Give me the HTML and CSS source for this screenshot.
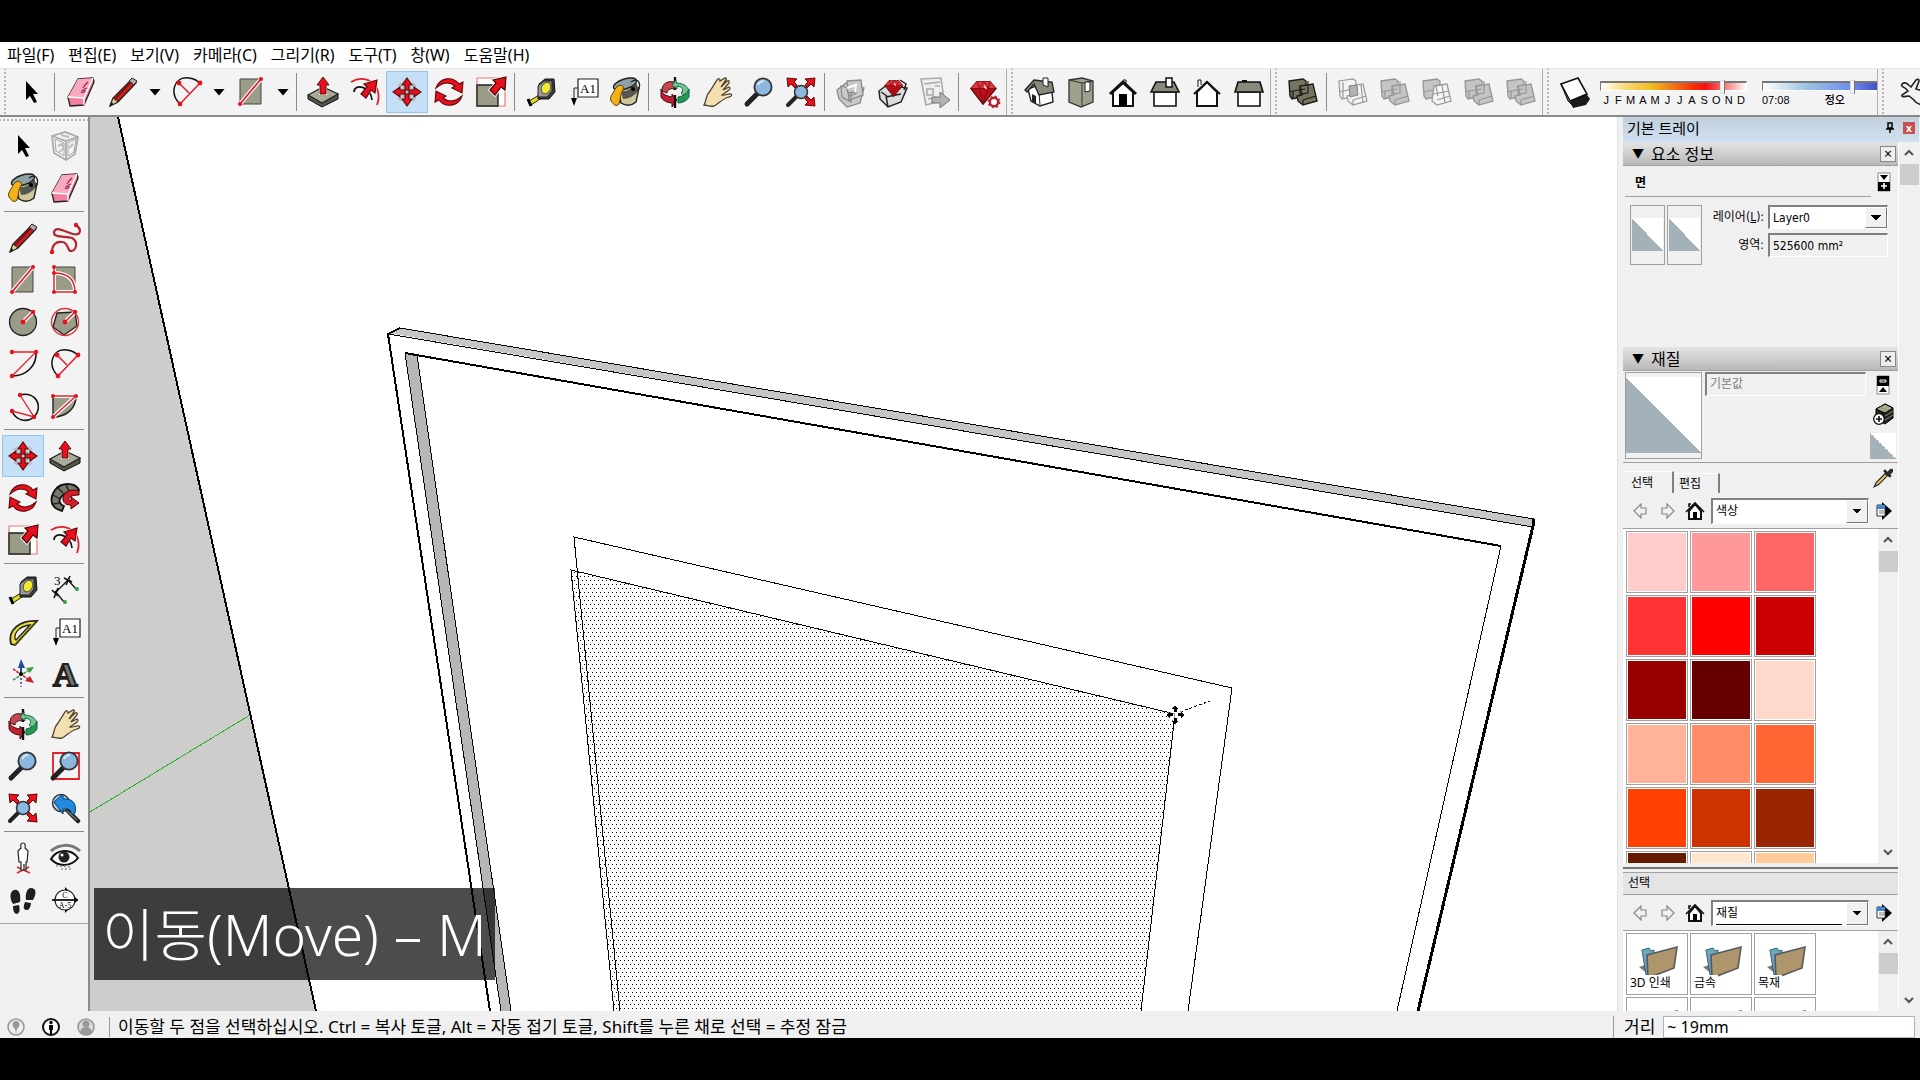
FILE: index.html
```
<!DOCTYPE html>
<html lang="ko">
<head>
    <meta charset="UTF-8">
    <meta name="viewport" content="width=device-width, initial-scale=1.0">
    <title>SketchUp</title>
    <link rel="stylesheet" href="styles.css">
</head>
<body>
    <!-- icon set, 32x32 each -->
    <svg class="sprite" aria-hidden="true">
        <symbol id="cursor" viewBox="0 0 32 32"><path d="M11 5v19l4-4 4 7 3-1-4-8h5z" fill="#000"/></symbol>
        <symbol id="eraser" viewBox="0 0 32 32">
            <path d="M3 21 13 3l15-1 1 4-10 23-14 1z" fill="#f47f9c" stroke="#222" stroke-width="1.3" stroke-linejoin="round"/>
            <path d="M13 3l15-1-8 20L3 21z" fill="#f9a9be"/><path d="M3 21l16 1 9-20M19 22v7" fill="none" stroke="#fff" stroke-width="1.4"/>
            <path d="M16 17l2-3 2 1-2 2M18 12l2-3M20 9l3-3M19 13l3-1" stroke="#902848" stroke-width="1.2" fill="none"/>
        </symbol>
        <symbol id="pencil" viewBox="0 0 32 32">
            <path d="M3 30l3-8L25 3l4 4-18 19z" fill="#c8201c" stroke="#222" stroke-width="1.3"/>
            <path d="M3 30l3-8 5 4z" fill="#e6cf9b" stroke="#222"/><path d="M3 30l2-4 1 2z"/>
            <path d="M8 23 24 6" stroke="#7a1010" stroke-width="1.6"/><path d="M22 5l3-3 5 3-3 4z" fill="#b9a8ac" stroke="#222"/>
        </symbol>
        <symbol id="arc2" viewBox="0 0 32 32">
            <path d="M9 28C-2 17 3 0 18 2q8 1 11 6" fill="none" stroke="#111" stroke-width="1.5"/>
            <path d="M8 7l10 10M29 7 9 28" stroke="#e0202c" stroke-width="1.5"/>
            <g fill="#e8101c"><circle cx="8" cy="7" r="2.4"/><circle cx="29" cy="7" r="2.4"/><circle cx="9" cy="28" r="2.4"/></g>
        </symbol>
        <symbol id="rect" viewBox="0 0 32 32">
            <path d="M5 3h21v25H5z" fill="#9b9c88" stroke="#444"/><path d="M5 28 26 3" stroke="#fff" stroke-width="4"/><path d="M5 28 26 3" stroke="#e0202c" stroke-width="1.8"/>
            <g fill="#e8101c"><circle cx="5" cy="28" r="2"/><circle cx="26" cy="3" r="2"/></g>
        </symbol>
        <symbol id="push" viewBox="0 0 32 32">
            <path d="M1 19v4l14 8 16-8v-5z" fill="#55564a" stroke="#111"/><path d="M1 19l15-8 15 7-16 9z" fill="#a9aa97" stroke="#222" stroke-width="1.2"/>
            <path d="M12 19V10H9l7-10 7 10h-3v9z" fill="#fff"/><path d="M13 18V9h-3l6-8 6 8h-3v9z" fill="#e8101c" stroke="#5b0a0c"/>
        </symbol>
        <symbol id="offset" viewBox="0 0 32 32">
            <path d="M2 6C18-4 35 11 28 29" fill="none" stroke="#e0202c" stroke-width="1.8"/><path d="M5 16c0-9 17-6 18 8" fill="none" stroke="#111" stroke-width="1.7"/>
            <path d="M13 21l5-10-4-4L29 3l-2 15-4-4-6 9z" fill="#fff"/><path d="M12 18l6-7-3-3 13-4-2 13-4-3-5 8z" fill="#e8101c" stroke="#5b0a0c" stroke-width="1.2"/>
        </symbol>
        <symbol id="move" viewBox="0 0 32 32">
            <path d="M8 8l16 16M24 8 8 24" stroke="#bbb" stroke-width="5" stroke-dasharray="3 2"/>
            <g fill="#e8101c" stroke="#5b0a0c" stroke-width="1.1"><path id="mv" d="M16 2l5 7h-3v5h-4V9h-3z"/><use href="#mv" transform="rotate(90 16 16)"/><use href="#mv" transform="rotate(180 16 16)"/><use href="#mv" transform="rotate(270 16 16)"/></g>
        </symbol>
        <symbol id="rotate" viewBox="0 0 32 32">
            <g fill="#e8101c" stroke="#5b0a0c" stroke-width="1.1"><path id="rt" d="M3 12C7 1 20 0 26 8l4-2-1 11-10-5 3-2C17 6 10 6 3 12z"/><use href="#rt" transform="rotate(180 16 16)"/></g>
        </symbol>
        <symbol id="scale" viewBox="0 0 32 32">
            <path d="M2 2h28v28H2z" fill="#fff" stroke="#e77" stroke-width="1.2"/><path d="M2 9h21v21H2z" fill="#9b9c88" stroke="#222" stroke-width="1.4"/>
            <path d="M15 14l6-7-3-3 13-3-1 13-4-3-6 8z" fill="#e8101c" stroke="#fff" stroke-width="3"/><path d="M15 14l6-7-3-3 13-3-1 13-4-3-6 8z" fill="#e8101c" stroke="#400" stroke-width="1.2"/>
        </symbol>
        <symbol id="tape" viewBox="0 0 32 32">
            <path d="M4 25 16 18l2 3-12 8z" fill="#e6dc1e" stroke="#222"/><path d="M3 23l3 7" stroke="#000" stroke-width="3"/>
            <path d="M14 8 20 3h9l1 13-6 7H13z" fill="#3c3c3c" stroke="#111"/><path d="M13 10 19 5h8v10l-5 6h-9z" fill="#999" stroke="#222"/><ellipse cx="21" cy="12" rx="4.5" ry="6" transform="rotate(25 21 12)" fill="#f2ea2a" stroke="#555"/>
        </symbol>
        <symbol id="paint" viewBox="0 0 32 32">
            <path d="M8 10l4 17q8 5 15-1l3-14z" fill="#cfc79a" stroke="#222" stroke-width="1.4"/><path d="M12 15q8 2 15-9l3 8q-7 9-16 9z" fill="#55564e"/>
            <ellipse cx="16" cy="8" rx="12" ry="5" transform="rotate(-18 16 8)" fill="#8ca2a6" stroke="#222" stroke-width="1.4"/>
            <path d="M6 13C10 7 16 9 14 14c-3 3-2 8-4 14-3 3-5 1-8-3-2-4 2-7 4-12z" fill="#f3b019" stroke="#5b4208"/><path d="M22 6c8-6 11 4 6 9" fill="none" stroke="#222" stroke-width="1.3"/><circle cx="24" cy="13" r="2"/>
        </symbol>
        <symbol id="orbit" viewBox="0 0 32 32">
            <path d="M16 1v13" stroke="#111" stroke-width="2.4"/><path d="M3 15C3 6 10 5 15 6v7C11 12 8 14 8 17z" fill="#c84850" stroke="#411"/>
            <path d="M17 4l-4 5 5 4v-3c6 1 7 4 4 7l6 4c5-7-1-14-11-14z" fill="#77c492" stroke="#164"/><path d="M30 13v8c-2 4-7 6-11 6v-6c5-1 9-3 11-8z" fill="#259653" stroke="#164"/>
            <path d="M2 13v8c2 4 7 6 11 6v4l5-7-5-6v3C7 20 3 18 2 13z" fill="#c21d32" stroke="#411"/><path d="M16 19v13" stroke="#111" stroke-width="2.4"/>
        </symbol>
        <symbol id="pan" viewBox="0 0 32 32"><path d="M3 29c3-5 1-9 6-14L16 4q3-3 3 1L24 2q2 0 1 2l-5 7 6-6q3-1 2 2l-6 7 6-3q2 1 0 3l-7 5c3 1 6-2 9-1q2 2-2 3c-7 2-11 7-15 9-4 1-7-1-10-1z" fill="#f3dfb0" stroke="#4c4330" stroke-width="1.3"/></symbol>
        <symbol id="zoom" viewBox="0 0 32 32"><path d="M4 28l10-10" stroke="#222" stroke-width="5" stroke-linecap="round"/><circle cx="20" cy="11" r="8.6" fill="#8cb7de" stroke="#333" stroke-width="1.8"/><path d="M15 9q2-4 6-4" fill="none" stroke="#d6e7f5" stroke-width="2"/></symbol>
        <symbol id="zoomwin" viewBox="0 0 32 32"><path d="M4 3h26v26H4z" fill="none" stroke="#e0202c" stroke-width="1.8"/><use href="#zoom"/></symbol>
        <symbol id="zoomext" viewBox="0 0 32 32">
            <path d="M3 29l9-9" stroke="#222" stroke-width="4" stroke-linecap="round"/><circle cx="16" cy="16" r="6.5" fill="#8cb7de" stroke="#333" stroke-width="1.5"/>
            <g fill="#e8101c" stroke="#5b0a0c"><path id="ze" d="M30 2l-1 9-3-3-4 4-2-3 3-3-3-3z"/><use href="#ze" transform="matrix(-1 0 0 1 32 0)"/><use href="#ze" transform="matrix(1 0 0 -1 0 32)"/></g>
        </symbol>
        <symbol id="prev" viewBox="0 0 32 32"><path d="M18 18l11 11" stroke="#222" stroke-width="4.5" stroke-linecap="round"/><circle cx="12" cy="11" r="8.5" fill="#a9cbe8" stroke="#333" stroke-width="1.4"/><path d="M5 10 14 2v5c10-1 14 5 12 14l-4 2c1-5-2-7-8-6v5z" fill="#2389dc" stroke="#0b3d6b"/><path d="M18 19l10 9" stroke="#777" stroke-width="1.4"/></symbol>
        <symbol id="getmodel" viewBox="0 0 32 32"><g fill="#c9c9c9" stroke="#8b8b8b" stroke-width="1.3"><path d="M2 14l9-7 18 5-4 15-13 4-8-8z"/><path d="M12 5l14-1 2 15-14 5zM6 10l10 3v13l-9-5z"/><path d="M12 12l9-3-1 7-7 1zM14 20l8-3"/></g><path d="M12 12l9-3-1 7" fill="none" stroke="#fff" stroke-width="2"/></symbol>
        <symbol id="gem" viewBox="0 0 32 32"><path d="M9 4h15l7 8-15 18L2 12z" fill="#b80f1a" stroke="#4d0509" stroke-width="1.3"/><path d="M9 4h15l7 8H2z" fill="#dd3a3f"/><path d="M2 12h29M9 4l3 8 4 17 6-17 2-8M12 12l5-8 5 8" fill="none" stroke="#7e0b12"/><path d="M18 7l3 6-4-2z" fill="#ffd7d7"/></symbol>
        <symbol id="warehouse" viewBox="0 0 32 32"><path d="M2 15l8-6 20 3-6 14-13 5-8-8z" fill="#ddd" stroke="#222" stroke-width="1.5"/><path d="M9 21l15-3M11 31l-2-11M23 4l6 4-2 6M4 16l6 4" fill="none" stroke="#222" stroke-width="1.5"/><use href="#gem" x="4" y="2" width="25" height="20"/></symbol>
        <symbol id="layout" viewBox="0 0 32 32"><g fill="#eee" stroke="#aaa" stroke-width="1.6"><path d="M2 3l20-1 3 22-18 5z"/><path d="M5 8l16-2M8 13h6v6H8zM16 10h5M9 23l8-2" fill="none"/></g><path d="M13 21h8v-5l10 8-10 8v-5h-8z" fill="#b2b2b2" stroke="#777"/></symbol>
        <symbol id="ruby" viewBox="0 0 32 32"><use href="#gem" width="28" height="30" y="1"/><circle cx="25" cy="26" r="4.2" fill="#fff" stroke="#b9202a" stroke-width="2.5"/><circle cx="25" cy="26" r="5.7" fill="none" stroke="#b9202a" stroke-width="1.5" stroke-dasharray="2 2.5"/></symbol>
        <symbol id="iso" viewBox="0 0 32 32"><path d="M5 13l3 12 9 5 13-4-1-10-11-8z" fill="#fff" stroke="#222" stroke-width="1.4"/><path d="M17 29l-1-12 12-3" fill="none" stroke="#222"/><path d="M2 14l9-10 18 2 2 10-15 3-5-11-7 8z" fill="#88897a" stroke="#222" stroke-width="1.3"/><path d="M20 2h5v9l-5-2z" fill="#fff" stroke="#222"/><path d="M9 18l4 2v8l-4-2z" fill="#222"/></symbol>
        <symbol id="top" viewBox="0 0 32 32"><path d="M4 4l13-2 11 3v21l-12 5-12-5z" fill="#9fa18c" stroke="#333" stroke-width="1.3"/><path d="M4 4l13 3 11-2M17 7v23" fill="none" stroke="#333"/><path d="M20 6h5v9l-5 1z" fill="#fff" stroke="#222"/></symbol>
        <symbol id="front" viewBox="0 0 32 32"><path d="M6 16v14h20V16L16 7z" fill="#fff" stroke="#111" stroke-width="2"/><path d="M3 18 16 6l13 12" fill="none" stroke="#111" stroke-width="3"/><path d="M12 18h8v12h-8z"/><path d="M16 4h3v4" fill="none" stroke="#111"/></symbol>
        <symbol id="right" viewBox="0 0 32 32"><path d="M5 16h22v14H5z" fill="#fff" stroke="#111" stroke-width="1.6"/><path d="M7 6h18l5 10H2z" fill="#88897a" stroke="#111" stroke-width="1.6"/><path d="M17 2h6v9h-6z" fill="#fff" stroke="#111" stroke-width="1.5"/></symbol>
        <symbol id="back" viewBox="0 0 32 32"><path d="M7 11V4h3v5" fill="#fff" stroke="#111"/><path d="M6 16v14h20V16L16 6z" fill="#fff" stroke="#111" stroke-width="2"/><path d="M3 18 16 6l13 12" fill="none" stroke="#111" stroke-width="2"/></symbol>
        <symbol id="left" viewBox="0 0 32 32"><path d="M5 16h22v14H5z" fill="#fff" stroke="#111" stroke-width="1.6"/><path d="M5 6h22l3 10H2z" fill="#88897a" stroke="#111" stroke-width="1.6"/><path d="M9 5h5" stroke="#111" stroke-width="2"/></symbol>
        <symbol id="shell" viewBox="0 0 32 32"><g fill="#75745f" stroke="#1c1c18" stroke-width="1.4"><path d="M2 5l14-2 3 2v15L5 23l-2-3z"/><path d="M13 10l13-2 4 17-14 4-5-4-1-5 5-1z"/></g><path d="M2 16l4-1 12-2M16 24l13-4M6 15v7M16 24v5M13 10v8l8-1V5" fill="none" stroke="#1c1c18" stroke-width="1.2"/></symbol>
        <symbol id="solid" viewBox="0 0 32 32"><g fill="#c4c4c4" stroke="#969696" stroke-width="1.3"><path d="M2 5l14-2 3 2v15L5 23l-2-3z"/><path d="M13 10l13-2 4 17-14 4-5-4-1-5 5-1z"/></g><path d="M2 16l4-1 12-2M16 24l13-4M6 15v7M16 24v5M13 10v8l8-1V5" fill="none" stroke="#969696" stroke-width="1.2"/></symbol>
        <symbol id="solidsect" viewBox="0 0 32 32"><g fill="#f3f3f3" stroke="#999" stroke-width="1.2"><path d="M2 5l14-2 3 2v15L5 23l-2-3z"/><path d="M13 10l13-2 4 17-14 4-5-4-1-5 5-1z"/></g><path d="M2 16l4-1 12-2M16 24l13-4M6 6v16M16 24v5M24 9l2 18" fill="none" stroke="#999" stroke-width="1.2"/><path d="M12 10l8-1 1 10-8 2z" fill="#b0b0b0" stroke="#888"/></symbol>
        <symbol id="solidsub" viewBox="0 0 32 32"><path d="M2 5l14-2 3 2v15L5 23l-2-3z" fill="#c4c4c4" stroke="#969696" stroke-width="1.3"/><path d="M13 10l13-2 4 17-14 4-5-4z" fill="#f4f4f4" stroke="#999" stroke-width="1.3"/><path d="M2 16l10-2M13 18l15-3M16 24l13-4M21 9l3 18M15 10l2 10" fill="none" stroke="#999" stroke-width="1.2"/></symbol>
        <symbol id="shadow" viewBox="0 0 32 32"><path d="M9 21l17-5 5 7-4 6-13 3z" fill="#1b1b1b"/><path d="M2 8l17-6 9 16-17 7z" fill="#fff" stroke="#111" stroke-width="1.6"/><path d="M2 8l9 17 4 6-6-6z" fill="#777" stroke="#111"/></symbol>
        <symbol id="interact" viewBox="0 0 32 32"><path d="M8 8c4-3 6 1 9 3l5-7q3-2 3 1l-3 8c5 1 8 3 10 2M8 8c-2 3 4 3 6 7l-6 4c-1 3 4 1 7 1l5 4c2 4 7 5 12 6" fill="none" stroke="#222" stroke-width="1.6"/></symbol>
        <symbol id="component" viewBox="0 0 32 32"><g fill="none" stroke="#a9a9a9" stroke-width="1.7"><path d="M3 6l13-4 13 5-3 17-9 6-12-7zM3 6l14 5 12-4M17 11v19"/><path d="M6 9l9 4v13l-8-5zM19 13l8-4-2 13-6 4z" stroke-width="1"/></g><path d="M9 16l4-2 2 6M20 18l4-4M10 22l4-3M12 5l8 2" stroke="#bbb" stroke-width="2" fill="none"/></symbol>
        <symbol id="freehand" viewBox="0 0 32 32"><path d="M27 3c6 4 5 11-3 9C14 9 7 4 5 10c-1 6 11 4 18 6 7 4 4 14-2 13-3-2-2-9-8-9-6-1-10 3-10 10" fill="none" stroke="#b3252d" stroke-width="2.2"/><g fill="#e8101c"><circle cx="27" cy="3" r="2.2"/><circle cx="3" cy="30" r="2.2"/></g></symbol>
        <symbol id="rotrect" viewBox="0 0 32 32"><path d="M5 3h21v25H5z" fill="#9b9c88" stroke="#444"/><path d="M5 3v25h21C26 16 19 9 5 9" fill="none" stroke="#fff" stroke-width="4"/><path d="M5 3v25h21C26 16 19 9 5 9" fill="none" stroke="#e0202c" stroke-width="1.5"/><g fill="#e8101c"><circle cx="5" cy="3" r="2"/><circle cx="5" cy="9" r="2"/><circle cx="5" cy="28" r="2"/><circle cx="26" cy="28" r="2"/></g></symbol>
        <symbol id="circle" viewBox="0 0 32 32"><circle cx="16" cy="16" r="13.5" fill="#9b9c88" stroke="#222" stroke-width="1.3"/><path d="M16 16 26 6" stroke="#fff" stroke-width="4"/><path d="M16 16 26 6" stroke="#e0202c" stroke-width="1.6"/><g fill="#e8101c"><circle cx="16" cy="16" r="2.4"/><circle cx="26" cy="6" r="2.2"/></g></symbol>
        <symbol id="polygon" viewBox="0 0 32 32"><path d="M26 6 28 20 15 29 4 21 8 7z" fill="#9b9c88" stroke="#222" stroke-width="1.4"/><circle cx="16" cy="16" r="13.5" fill="none" stroke="#e0303a" stroke-width="1.3"/><path d="M16 16 26 6" stroke="#fff" stroke-width="4"/><path d="M16 16 26 6" stroke="#e0202c" stroke-width="1.6"/><g fill="#e8101c"><circle cx="16" cy="16" r="2.4"/><circle cx="26" cy="6" r="2.2"/></g></symbol>
        <symbol id="arc" viewBox="0 0 32 32"><path d="M29 4c1 14-10 24-24 24" fill="none" stroke="#111" stroke-width="1.6"/><path d="M5 4h24L5 28" fill="none" stroke="#e0202c" stroke-width="1.3"/><g fill="#e8101c"><circle cx="5" cy="4" r="2.2"/><circle cx="29" cy="4" r="2.2"/><circle cx="5" cy="28" r="2.2"/></g></symbol>
        <symbol id="arc3" viewBox="0 0 32 32"><path d="M13 5c16-4 24 12 14 22-7 6-18 4-22-6" fill="none" stroke="#111" stroke-width="1.6"/><path d="M13 5 27 27 5 21" fill="none" stroke="#e0202c" stroke-width="1.3"/><g fill="#e8101c"><circle cx="13" cy="5" r="2.2"/><circle cx="5" cy="21" r="2.2"/><circle cx="27" cy="27" r="2.2"/></g></symbol>
        <symbol id="pie" viewBox="0 0 32 32"><path d="M4 6h23c0 13-10 21-23 21z" fill="#9b9c88" stroke="#222" stroke-width="1.4"/><path d="M4 6h23L4 27" fill="none" stroke="#fff" stroke-width="4"/><path d="M4 6h23L4 27" fill="none" stroke="#e0202c" stroke-width="1.5"/><g fill="#e8101c"><circle cx="4" cy="6" r="2"/><circle cx="27" cy="6" r="2"/><circle cx="4" cy="27" r="2"/></g></symbol>
        <symbol id="follow" viewBox="0 0 32 32"><path d="M30 8C26 0 12 0 6 8c-5 7-5 15 2 19l5 2 2-5c-5-2-6-6-2-10 4-5 10-5 16-4z" fill="#77776c" stroke="#111" stroke-width="1.8"/><path d="M4 13l7 4M9 6l5 5M17 3l3 6M4 22l7-1" stroke="#222" stroke-width="1.4"/><path d="M30 9c-9-3-17 2-16 9 1 4 4 5 8 5v4l8-6-8-6v4c-4-1-3-6 8-6z" fill="#d5202c" stroke="#400"/></symbol>
        <symbol id="protractor" viewBox="0 0 32 32"><path d="M4 28C0 14 13 4 30 5L8 29z" fill="#e9df37" stroke="#222" stroke-width="1.8"/><path d="M8 23c-1-8 6-13 15-14L9 24z" fill="#f3f3f3" stroke="#222" stroke-width="1.3"/><path d="M8 29 30 5" stroke="#665f10" stroke-width="2" stroke-dasharray="2 2"/></symbol>
        <symbol id="axes" viewBox="0 0 32 32"><path d="M14 16v13" stroke="#24a" stroke-width="1.5" stroke-dasharray="2 2"/><path d="M14 16V5" stroke="#1c4c9a" stroke-width="2"/><path d="M14 1l4 9h-7z" fill="#1c4c9a"/><path d="M6 22 24 11" stroke="#3a9a40" stroke-width="1.6" stroke-dasharray="3 1"/><path d="M27 9l-8 1 4 5z" fill="#3a9a40"/><path d="M6 11l18 12" stroke="#c22" stroke-width="1.6" stroke-dasharray="3 1"/><path d="M27 25l-9-2 5-5z" fill="#c8202c"/><circle cx="14" cy="16" r="2"/></symbol>
        <symbol id="person" viewBox="0 0 32 32"><path d="M10 25l13 6M22 25 10 31" stroke="#e0202c" stroke-width="1.5"/><path d="M16 1q3 0 2 5l3 3-1 11h-1v8h-2v-6v6h-3v-8h-2l-1-11 3-3q-1-5 2-5z" fill="#fff" stroke="#222" stroke-width="1.2"/></symbol>
        <symbol id="eye" viewBox="0 0 32 32"><path d="M2 9C10 2 22 1 31 9" fill="none" stroke="#777" stroke-width="3"/><path d="M2 17C8 7 22 6 29 16c-7 9-20 9-27 1z" fill="#fff" stroke="#111" stroke-width="2"/><circle cx="15" cy="15" r="5.5" fill="#222"/><circle cx="13" cy="13" r="1.5" fill="#fff"/><path d="M7 24l16 1M12 27h10" stroke="#999" stroke-width="1.5" stroke-dasharray="2 2"/></symbol>
        <symbol id="walk" viewBox="0 0 32 32"><g fill="#1f1f1f"><path d="M7 6c5-1 7 4 6 12l-7 2c-4-6-3-13 1-14z"/><path d="M6 22l6-1q2 7-2 9-4 0-4-8z"/><path d="M24 4c5 0 6 5 2 12l-7 0c-1-6 1-12 5-12z"/><path d="M18 18l6 1q-1 8-5 7-4-1-1-8z"/></g></symbol>
        <symbol id="folder" viewBox="0 0 40 36"><path d="M1 22l9-3v10z" fill="#777"/><path d="M4 5l7-2 2 3 3-1v20l-8 5z" fill="#6ba5c2" stroke="#3c6478"/><path d="M9 10l30-8-3 21L10 33z" fill="#b0966c" stroke="#555a5c" stroke-width="1.6"/></symbol>
        <symbol id="nav-back" viewBox="0 0 16 16"><path d="M2 8l7-7v4h5v6H9v4z" fill="none" stroke="#888" stroke-width="1.2"/></symbol>
        <symbol id="nav-home" viewBox="0 0 20 20"><path d="M4 10v8h12v-8l-6-7z" fill="#fff" stroke="#111" stroke-width="2"/><path d="M1 11l9-9 9 9M4 6V3h2" fill="none" stroke="#111" stroke-width="1.6"/><path d="M8 11h4v7H8z"/></symbol>
        <symbol id="nav-detail" viewBox="0 0 16 18"><path d="M6 0l10 9-10 9z"/><path d="M1 3h8v11H1z" fill="#fff" stroke="#333"/><path d="M1 3h8v4H1z" fill="#3a86d8"/><path d="M3 9h5M3 11h5" stroke="#777"/></symbol>
        <symbol id="chev" viewBox="0 0 10 8"><path d="M1 6l4-4 4 4" fill="none" stroke="#555" stroke-width="2"/></symbol>
        <symbol id="toggle" viewBox="0 0 14 20"><path d="M1 1h12v18H1z" fill="#fff" stroke="#888"/><path d="M1 10h12v9H1zM3 3h8l-4 5z"/><path d="M4 14h6M7 11v6" stroke="#fff" stroke-width="1.6"/></symbol>
        <symbol id="toggle-up" viewBox="0 0 14 20"><path d="M1 1h12v18H1z" fill="#fff" stroke="#888"/><path d="M1 1h12v10H1zM3 17h8l-4-5z"/><path d="M4 5h6v2H4z" fill="none" stroke="#fff"/></symbol>
        <symbol id="newmat" viewBox="0 0 22 22"><path d="M4 6l9-5 8 4v10l-8 6-9-5z" fill="#22221c" stroke="#000"/><path d="M4 6l9-5 8 4-8 5z" fill="#a9ab8c" stroke="#000"/><path d="M8 4l8 4M13 13l8-5M13 17l8-5" stroke="#8c8d70"/><circle cx="7" cy="16" r="5.3" fill="#fff" stroke="#111" stroke-width="1.3"/><path d="M4 16h6M7 13v6" stroke="#111" stroke-width="1.6"/></symbol>
        <symbol id="dropper" viewBox="0 0 20 20"><path d="M2 18l2-4 8-8 2 2-8 8z" fill="#e1bf62" stroke="#222"/><path d="M11 3l6 6" stroke="#222" stroke-width="2.4"/><path d="M13 6l4-4q3 0 1 3l-3 3z" fill="#333" stroke="#222"/></symbol>
    </svg>

    <div class="app">
        <nav class="menubar">
            <button>파일(F)</button>
            <button>편집(E)</button>
            <button>보기(V)</button>
            <button>카메라(C)</button>
            <button>그리기(R)</button>
            <button>도구(T)</button>
            <button>창(W)</button>
            <button>도움말(H)</button>
        </nav>

        <div class="toolbars">
            <div class="bar">
                <button class="tool" aria-label="선택"><svg><use href="#cursor"/></svg></button>
                <i class="sep"></i>
                <button class="tool" aria-label="지우개"><svg><use href="#eraser"/></svg></button>
                <button class="tool" aria-label="선"><svg><use href="#pencil"/></svg></button>
                <button class="drop" aria-label="선 도구"></button>
                <button class="tool" aria-label="호"><svg><use href="#arc2"/></svg></button>
                <button class="drop" aria-label="호 도구"></button>
                <button class="tool" aria-label="직사각형"><svg><use href="#rect"/></svg></button>
                <button class="drop" aria-label="도형 도구"></button>
                <i class="sep"></i>
                <button class="tool" aria-label="밀기/끌기"><svg><use href="#push"/></svg></button>
                <button class="tool" aria-label="오프셋"><svg><use href="#offset"/></svg></button>
                <button class="tool active" aria-label="이동"><svg><use href="#move"/></svg></button>
                <button class="tool" aria-label="회전"><svg><use href="#rotate"/></svg></button>
                <button class="tool" aria-label="배율"><svg><use href="#scale"/></svg></button>
                <i class="sep"></i>
                <button class="tool" aria-label="줄자"><svg><use href="#tape"/></svg></button>
                <button class="tool" aria-label="텍스트">
                    <svg viewBox="0 0 32 32"><path d="M11 3h20v18H11z" fill="#fff" stroke="#222" stroke-width="1.2"/><path d="M11 12H7v12" fill="none" stroke="#222"/><path d="M4 22h6l-3 8z"/><text x="21" y="17" text-anchor="middle" class="glyph">A1</text></svg>
                </button>
                <button class="tool" aria-label="페인트통"><svg><use href="#paint"/></svg></button>
                <i class="sep"></i>
                <button class="tool" aria-label="궤도"><svg><use href="#orbit"/></svg></button>
                <button class="tool" aria-label="이동 보기"><svg><use href="#pan"/></svg></button>
                <button class="tool" aria-label="확대/축소"><svg><use href="#zoom"/></svg></button>
                <button class="tool" aria-label="범위 확대"><svg><use href="#zoomext"/></svg></button>
                <i class="sep"></i>
                <button class="tool" aria-label="모델 가져오기"><svg><use href="#getmodel"/></svg></button>
                <button class="tool" aria-label="3D Warehouse"><svg><use href="#warehouse"/></svg></button>
                <button class="tool" aria-label="LayOut"><svg><use href="#layout"/></svg></button>
                <i class="sep"></i>
                <button class="tool" aria-label="확장 프로그램"><svg><use href="#ruby"/></svg></button>
            </div>
            <div class="bar">
                <button class="tool" aria-label="등각"><svg><use href="#iso"/></svg></button>
                <button class="tool" aria-label="맨 위"><svg><use href="#top"/></svg></button>
                <button class="tool" aria-label="앞"><svg><use href="#front"/></svg></button>
                <button class="tool" aria-label="오른쪽"><svg><use href="#right"/></svg></button>
                <button class="tool" aria-label="뒤"><svg><use href="#back"/></svg></button>
                <button class="tool" aria-label="왼쪽"><svg><use href="#left"/></svg></button>
            </div>
            <div class="bar">
                <button class="tool" aria-label="외부 셸"><svg><use href="#shell"/></svg></button>
                <i class="sep"></i>
                <button class="tool" aria-label="교차"><svg><use href="#solidsect"/></svg></button>
                <button class="tool" aria-label="결합"><svg><use href="#solid"/></svg></button>
                <button class="tool" aria-label="빼기"><svg><use href="#solidsub"/></svg></button>
                <button class="tool" aria-label="자르기"><svg><use href="#solid"/></svg></button>
                <button class="tool" aria-label="분할"><svg><use href="#solid"/></svg></button>
            </div>
            <div class="bar">
                <button class="tool" aria-label="그림자"><svg><use href="#shadow"/></svg></button>
                <div class="slider month">
                    <input type="range" min="0" max="100" value="85" aria-label="날짜">
                    <div class="ticks"><span>J</span><span>F</span><span>M</span><span>A</span><span>M</span><span>J</span><span>J</span><span>A</span><span>S</span><span>O</span><span>N</span><span>D</span></div>
                </div>
                <div class="slider time">
                    <input type="range" min="0" max="100" value="80" aria-label="시간">
                    <div class="ticks"><span>07:08</span><span>정오</span></div>
                </div>
            </div>
            <div class="bar">
                <button class="tool" aria-label="상호 작용"><svg><use href="#interact"/></svg></button>
            </div>
        </div>

        <main class="workspace">
            <aside class="palette">
                <div class="tools">
                    <button class="tool" aria-label="선택"><svg><use href="#cursor"/></svg></button>
                    <button class="tool" aria-label="구성 요소"><svg><use href="#component"/></svg></button>
                    <button class="tool" aria-label="페인트통"><svg><use href="#paint"/></svg></button>
                    <button class="tool" aria-label="지우개"><svg><use href="#eraser"/></svg></button>
                    <hr>
                    <button class="tool" aria-label="선"><svg><use href="#pencil"/></svg></button>
                    <button class="tool" aria-label="자유 그리기"><svg><use href="#freehand"/></svg></button>
                    <button class="tool" aria-label="직사각형"><svg><use href="#rect"/></svg></button>
                    <button class="tool" aria-label="회전된 직사각형"><svg><use href="#rotrect"/></svg></button>
                    <button class="tool" aria-label="원"><svg><use href="#circle"/></svg></button>
                    <button class="tool" aria-label="다각형"><svg><use href="#polygon"/></svg></button>
                    <button class="tool" aria-label="호"><svg><use href="#arc"/></svg></button>
                    <button class="tool" aria-label="2점 호"><svg><use href="#arc2"/></svg></button>
                    <button class="tool" aria-label="3점 호"><svg><use href="#arc3"/></svg></button>
                    <button class="tool" aria-label="파이"><svg><use href="#pie"/></svg></button>
                    <hr>
                    <button class="tool active" aria-label="이동"><svg><use href="#move"/></svg></button>
                    <button class="tool" aria-label="밀기/끌기"><svg><use href="#push"/></svg></button>
                    <button class="tool" aria-label="회전"><svg><use href="#rotate"/></svg></button>
                    <button class="tool" aria-label="따라가기"><svg><use href="#follow"/></svg></button>
                    <button class="tool" aria-label="배율"><svg><use href="#scale"/></svg></button>
                    <button class="tool" aria-label="오프셋"><svg><use href="#offset"/></svg></button>
                    <hr>
                    <button class="tool" aria-label="줄자"><svg><use href="#tape"/></svg></button>
                    <button class="tool" aria-label="치수">
                        <svg viewBox="0 0 32 32"><path d="M6 19 20 5M6 17l9 11M18 5l10 11" fill="none" stroke="#111" stroke-width="1.3"/><path d="M3 16l6 6M9 14l-4 10M15 4l8 4M21 2l-4 9" stroke="#111" stroke-width="1.6"/><text x="5" y="11" class="glyph">3</text><g fill="#2ea043"><circle cx="28" cy="15" r="2"/><circle cx="16" cy="28" r="2"/></g></svg>
                    </button>
                    <button class="tool" aria-label="각도기"><svg><use href="#protractor"/></svg></button>
                    <button class="tool" aria-label="텍스트">
                        <svg viewBox="0 0 32 32"><path d="M11 3h20v18H11z" fill="#fff" stroke="#222" stroke-width="1.2"/><path d="M11 12H7v12" fill="none" stroke="#222"/><path d="M4 22h6l-3 8z"/><text x="21" y="17" text-anchor="middle" class="glyph">A1</text></svg>
                    </button>
                    <button class="tool" aria-label="축"><svg><use href="#axes"/></svg></button>
                    <button class="tool" aria-label="3D 텍스트">
                        <svg viewBox="0 0 32 32"><text x="4" y="28" class="letter">A</text></svg>
                    </button>
                    <hr>
                    <button class="tool" aria-label="궤도"><svg><use href="#orbit"/></svg></button>
                    <button class="tool" aria-label="이동 보기"><svg><use href="#pan"/></svg></button>
                    <button class="tool" aria-label="확대/축소"><svg><use href="#zoom"/></svg></button>
                    <button class="tool" aria-label="창 확대"><svg><use href="#zoomwin"/></svg></button>
                    <button class="tool" aria-label="범위 확대"><svg><use href="#zoomext"/></svg></button>
                    <button class="tool" aria-label="이전"><svg><use href="#prev"/></svg></button>
                    <hr>
                    <button class="tool" aria-label="카메라 배치"><svg><use href="#person"/></svg></button>
                    <button class="tool" aria-label="둘러보기"><svg><use href="#eye"/></svg></button>
                    <button class="tool" aria-label="걷기"><svg><use href="#walk"/></svg></button>
                    <button class="tool" aria-label="단면">
                        <svg viewBox="0 0 32 32"><path d="M16 3v26l13-13z"/><circle cx="16" cy="16" r="10" fill="#fff" stroke="#222" stroke-width="1.2"/><path d="M3 16h26" stroke="#111" stroke-width="1.8"/><text x="16" y="14" text-anchor="middle" class="glyph tiny">C</text><text x="16" y="24" text-anchor="middle" class="glyph tiny">A-5</text></svg>
                    </button>
                </div>
            </aside>

            <section class="viewport">
                <svg class="model" viewBox="90 117 1527 894" preserveAspectRatio="xMinYMin slice" shape-rendering="crispEdges">
                    <defs>
                        <pattern id="dots" width="4" height="8" patternUnits="userSpaceOnUse"><path d="M0 0h1v1H0zM2 4h1v1H2z"/></pattern>
                    </defs>
                    <path d="M90 117h28l198 894H90z" fill="#cdcdcb"/>
                    <path d="M90 812l160-97" stroke="#2fae2f"/>
                    <path d="M118 117l198 894" stroke="#000" stroke-width="2"/>
                    <path d="M388 333l12-5 1134 191-3 8z" fill="#c6c6c6"/>
                    <path d="M405 353l12 2 94 656h-10z" fill="#b7b7b7"/>
                    <g fill="none" stroke="#000">
                        <path d="M400 328l1134 191M388 334l1145 193M405 353l96 658M417 355l94 656M1501 546l-104 465"/>
                        <path d="M490 1011L388 334l12-6M405 353l1096 193" stroke-width="2"/>
                        <path d="M1533 519v7l-115 485" stroke-width="3"/>
                        <path d="M571 570l604 144-34 297H614z" fill="url(#dots)"/>
                        <path d="M620 1011L574 537l658 151-44 323"/>
                        <path d="M1180 712l30-11" stroke-dasharray="3 2"/>
                    </g>
                    <path d="M1168 708h14v15h-14z" fill="#fff" opacity=".6"/>
                    <path d="M1175 705l3 4h-1v3h-3v-3h-2zM1175 725l3-4h-1v-3h-3v3h-2zM1166 715l4-3v1h3v3h-3v2zM1185 715l-4-3v1h-3v3h3v2z"/>
                </svg>
                <div class="caption">이동(Move) – M</div>
            </section>

            <aside class="tray">
                <header class="tray-title">
                    <span>기본 트레이</span>
                    <button class="pin" aria-label="고정"><svg viewBox="0 0 10 12"><path d="M3 1h4v5H3zM1 7h8M5 7v4" fill="none" stroke="#000" stroke-width="1.5"/></svg></button>
                    <button class="close" aria-label="닫기">x</button>
                </header>
                <div class="tray-body">
                    <div class="panels">
                        <section class="panel entity">
                            <h2><span>▼</span>요소 정보<button aria-label="닫기">×</button></h2>
                            <div class="entity-name"><b>면</b><svg class="toggle"><use href="#toggle"/></svg></div>
                            <div class="entity-info">
                                <div class="face"></div>
                                <div class="face"></div>
                                <div class="fields">
                                    <label for="layer">레이어(<u>L</u>):</label>
                                    <span class="select"><select id="layer"><option>Layer0</option></select></span>
                                    <label for="area">영역:</label>
                                    <input id="area" type="text" value="525600 mm²" readonly>
                                </div>
                            </div>
                        </section>
                        <section class="panel materials">
                            <h2><span>▼</span>재질<button aria-label="닫기">×</button></h2>
                            <div class="current">
                                <div class="face big"></div>
                                <input type="text" value="기본값" aria-label="재질 이름" disabled>
                                <div class="side">
                                    <svg class="toggle"><use href="#toggle-up"/></svg>
                                    <svg class="newmat"><use href="#newmat"/></svg>
                                    <div class="mini"></div>
                                </div>
                            </div>
                            <div class="tabs">
                                <button class="on">선택</button>
                                <button>편집</button>
                                <svg class="dropper"><use href="#dropper"/></svg>
                            </div>
                            <div class="navrow">
                                <button aria-label="뒤로"><svg><use href="#nav-back"/></svg></button>
                                <button class="fwd" aria-label="앞으로"><svg><use href="#nav-back"/></svg></button>
                                <button class="home" aria-label="모델"><svg><use href="#nav-home"/></svg></button>
                                <span class="select"><select aria-label="재질 모음"><option>색상</option></select></span>
                                <button class="home" aria-label="세부 정보"><svg><use href="#nav-detail"/></svg></button>
                            </div>
                            <div class="list colors">
                                <div class="swatches">
                                    <i class="c1"></i><i class="c2"></i><i class="c3"></i>
                                    <i class="c4"></i><i class="c5"></i><i class="c6"></i>
                                    <i class="c7"></i><i class="c8"></i><i class="c9"></i>
                                    <i class="c10"></i><i class="c11"></i><i class="c12"></i>
                                    <i class="c13"></i><i class="c14"></i><i class="c15"></i>
                                    <i class="c16"></i><i class="c17"></i><i class="c18"></i>
                                </div>
                                <div class="scroll"><svg><use href="#chev"/></svg><i></i><svg class="down"><use href="#chev"/></svg></div>
                            </div>
                            <h3>선택</h3>
                            <div class="navrow">
                                <button aria-label="뒤로"><svg><use href="#nav-back"/></svg></button>
                                <button class="fwd" aria-label="앞으로"><svg><use href="#nav-back"/></svg></button>
                                <button class="home" aria-label="모델"><svg><use href="#nav-home"/></svg></button>
                                <span class="select"><select class="underlined" aria-label="재질 폴더"><option>재질</option></select></span>
                                <button class="home" aria-label="세부 정보"><svg><use href="#nav-detail"/></svg></button>
                            </div>
                            <div class="list folders">
                                <div class="swatches">
                                    <a href="#"><svg><use href="#folder"/></svg><span>3D 인쇄</span></a>
                                    <a href="#"><svg><use href="#folder"/></svg><span>금속</span></a>
                                    <a href="#"><svg><use href="#folder"/></svg><span>목재</span></a>
                                    <a href="#"><svg><use href="#folder"/></svg></a>
                                    <a href="#"><svg><use href="#folder"/></svg></a>
                                    <a href="#"><svg><use href="#folder"/></svg></a>
                                </div>
                                <div class="scroll"><svg><use href="#chev"/></svg><i></i></div>
                            </div>
                        </section>
                    </div>
                    <div class="scroll outer"><svg><use href="#chev"/></svg><i></i><svg class="down"><use href="#chev"/></svg></div>
                </div>
            </aside>
        </main>

        <footer class="status">
            <svg viewBox="0 0 20 20"><circle cx="10" cy="10" r="8" fill="none" stroke="#999" stroke-width="1.6"/><path d="M10 4c5 0 4 6 1 8l-1 5-1-5C6 10 5 4 10 4z" fill="#999"/></svg>
            <svg viewBox="0 0 20 20"><circle cx="10" cy="10" r="8" fill="#fff" stroke="#111" stroke-width="2"/><circle cx="10" cy="5.5" r="1.7"/><path d="M8 8h4v5h-1v4H9v-4H8z"/></svg>
            <svg viewBox="0 0 20 20"><circle cx="10" cy="10" r="8" fill="#ddd" stroke="#999" stroke-width="1.6"/><circle cx="10" cy="7" r="3.5" fill="#999"/><path d="M4 16q0-6 6-6t6 6q-6 4-12 0z" fill="#999"/></svg>
            <p>이동할 두 점을 선택하십시오. Ctrl = 복사 토글, Alt = 자동 접기 토글, Shift를 누른 채로 선택 = 추정 잠금</p>
            <div class="measure">
                <label for="distance">거리</label>
                <input id="distance" type="text" value="~ 19mm">
            </div>
        </footer>
    </div>
</body>
</html>
```
FILE: styles.css
```
* {
    box-sizing: border-box;
}

body {
    margin: 0;
    background: #000;
    color: #000;
    font-family: "Noto Sans", "Noto Sans CJK KR", sans-serif;
    font-size: 12px;
}

button {
    border: none;
    padding: 0;
    background: none;
    font: inherit;
    color: inherit;
}

svg {
    display: block;
}

.sprite {
    display: none;
}

.glyph {
    font-family: "Liberation Serif", serif;
    font-size: 13px;
}

.glyph.tiny {
    font-size: 8px;
}

.letter {
    font: bold 34px "Liberation Serif", serif;
    fill: #77776a;
    stroke: #222;
    stroke-width: 2px;
}

.app {
    display: flex;
    flex-direction: column;
    height: 100vh;
    padding: 42px 0;
    overflow: hidden;
}

/* menu */
.menubar {
    display: flex;
    flex: none;
    height: 26px;
    background: #fff;
}

.menubar button {
    padding: 0 7px;
    font-size: 16px;
    line-height: 26px;
}

/* toolbars */
.toolbars {
    display: flex;
    flex: none;
    height: 49px;
    background: #f3f3f3;
    border-top: 1px solid #e6e6e6;
    border-bottom: 2px solid #8a8a8a;
    overflow: hidden;
}

.bar {
    display: flex;
    flex: none;
    align-items: center;
    padding-left: 11px;
    border-left: 1px solid #b0b0b0;
    background: radial-gradient(#b5b5b5 1px, transparent 1px) 3px 2px / 4px 4px repeat-y;
}

.bar:first-child {
    padding-left: 10px;
    border-left: none;
}

.tool {
    display: flex;
    align-items: center;
    justify-content: center;
    width: 42px;
    height: 42px;
    flex: none;
}

.tool svg {
    width: 32px;
    height: 32px;
}

.tool.active {
    background: #c5e0f6;
    border: 1px solid #93c7ef;
}

.sep {
    width: 1px;
    height: 38px;
    margin: 0 5px 0 2px;
    background: #8c8c8c;
}

.drop {
    width: 22px;
    height: 42px;
}

.drop::before {
    content: "";
    display: block;
    margin: 0 auto;
    width: 12px;
    height: 7px;
    background: #000;
    clip-path: polygon(0 0, 100% 0, 50% 100%);
}

.slider {
    width: 147px;
    margin: 0 10px 0 4px;
    font-family: "Liberation Sans", "Noto Sans CJK KR", sans-serif;
    font-size: 11px;
    font-weight: 500;
    line-height: 12px;
}

.slider input {
    display: block;
    appearance: none;
    width: 100%;
    height: 16px;
    margin: 0;
    background: none;
}

.slider input::-webkit-slider-runnable-track {
    height: 10px;
    border: 1px solid #fff;
    border-top: 2px solid #777;
    border-left-color: #777;
    background: linear-gradient(90deg, #fff, #f8d870 18%, #f0bc20 35%, #f62a08 65%, #f81010 72%, #f7a0a0 90%, #fff);
}

.slider input::-webkit-slider-thumb {
    appearance: none;
    width: 5px;
    height: 14px;
    margin-top: -3px;
    background: #f5f5f5;
    border: 1px solid #ddd;
    border-right-color: #777;
}

.slider.time {
    width: 115px;
    margin: 0 0 0 5px;
}

.slider.time input::-webkit-slider-runnable-track {
    border-right: none;
    background: linear-gradient(90deg, #fff, #9cc4e0 38%, #6c8cf0 78%, #4450c8);
}

.ticks {
    display: flex;
    justify-content: space-between;
}

.month .ticks span {
    flex: 1;
    text-align: center;
}

.time .ticks {
    padding-right: 32px;
}

/* middle row */
.workspace {
    display: flex;
    flex: 1;
    min-height: 0;
    background: #f0f0f0;
}

.palette {
    width: 90px;
    border-right: 2px solid #8a8a8a;
}

.tools {
    display: flex;
    flex-wrap: wrap;
    padding: 8px 2px 2px;
    background: radial-gradient(#b5b5b5 1px, transparent 1px) 2px 1px / 4px 4px repeat-x #f3f3f3;
    border-bottom: 1px solid #a8a8a8;
}

.tools hr {
    width: 80px;
    height: 1px;
    margin: 2px 2px 5px;
    border: none;
    background: #8c8c8c;
}

.viewport {
    position: relative;
    flex: 1;
    min-width: 0;
    overflow: hidden;
    background: #fff;
}

.model {
    width: 100%;
    height: 100%;
}

.caption {
    position: absolute;
    left: 4px;
    bottom: 31px;
    padding: 0 8px;
    background: rgba(0, 0, 0, 0.7);
    color: #fff;
    font-size: 57px;
    font-weight: 300;
    line-height: 92px;
    white-space: nowrap;
}

/* tray */
.tray {
    display: flex;
    flex-direction: column;
    width: 303px;
    padding: 0 1px 0 5px;
    background: #f0f0f0;
    border-left: 1px solid #e0e0e0;
}

.tray-title {
    display: flex;
    flex: none;
    align-items: center;
    height: 25px;
    padding: 0 4px 3px;
    background: linear-gradient(#c2d0dc, #cfe0f1);
    font-size: 15px;
    line-height: 22px;
}

.tray-title span {
    flex: 1;
}

.pin svg {
    width: 10px;
    height: 12px;
    margin-right: 8px;
}

.close {
    width: 12px;
    height: 12px;
    background: #c75050;
    color: #fff;
    font-size: 10px;
    font-weight: bold;
    line-height: 10px;
}

.tray-body {
    display: flex;
    flex: 1;
    min-height: 0;
}

.panels {
    display: flex;
    flex-direction: column;
    flex: 1;
    min-width: 0;
    overflow: hidden;
    border-right: 1px solid #fff;
}

.panel h2 {
    display: flex;
    align-items: center;
    height: 24px;
    margin: 0;
    padding: 0 2px 0 9px;
    border-bottom: 1px solid #a0a0a0;
    background: linear-gradient(#e4e4e4, #b9b9b9);
    font-size: 16px;
    font-weight: normal;
    line-height: 20px;
}

.panel h2 span {
    width: 19px;
    font-size: 12px;
}

.panel h2 button {
    width: 16px;
    height: 16px;
    margin-left: auto;
    border: 1px solid #888;
    background: #eee;
    font-size: 14px;
    line-height: 12px;
}

.entity {
    flex: none;
    height: 205px;
}

.entity-name {
    display: flex;
    align-items: center;
    justify-content: space-between;
    height: 31px;
    padding: 0 7px 0 12px;
    background: linear-gradient(#a0a0a0, #a0a0a0) 2px 100% / 246px 1px no-repeat;
}

.toggle {
    width: 14px;
    height: 20px;
}

.entity-info {
    display: flex;
    gap: 2px;
    padding: 8px 10px 0 7px;
}

.face {
    width: 35px;
    height: 60px;
    padding: 12px 1px 13px;
    border: 1px solid #a0a0a0;
}

.face::before,
.mini {
    content: "";
    display: block;
    height: 100%;
    background: linear-gradient(to top right, #a3b2b9 50%, #fff 50%);
}

.fields {
    display: grid;
    grid-template-columns: 1fr 120px;
    gap: 4px 4px;
    flex: 1;
    align-content: start;
}

.fields label {
    text-align: right;
    font-family: "DejaVu Sans Condensed", "Noto Sans CJK KR", sans-serif;
    line-height: 24px;
}

input[type="text"],
select {
    width: 100%;
    height: 24px;
    padding: 0 3px;
    border: 1px solid #fff;
    border-top: 2px solid #808080;
    border-left: 2px solid #808080;
    border-radius: 0;
    background: #f0f0f0;
    color: #000;
    font-family: "DejaVu Sans Condensed", "Noto Sans CJK KR", sans-serif;
    font-size: 12px;
}

input[type="text"]:disabled {
    color: #808080;
}

select {
    appearance: none;
    background: #fff;
}

.select {
    position: relative;
    display: block;
}

.select::after {
    content: "";
    position: absolute;
    top: 2px;
    right: 1px;
    bottom: 1px;
    width: 20px;
    border: 1px solid #fff;
    border-right-color: #777;
    border-bottom-color: #777;
    background: conic-gradient(from -45deg at 50% 100%, #000 90deg, transparent 0) 50% 50% / 10px 5px no-repeat #f0f0f0;
    pointer-events: none;
}

.materials {
    display: flex;
    flex-direction: column;
    flex: 1;
    min-height: 0;
}

.materials > * {
    flex: none;
}

.current {
    display: flex;
    align-items: flex-start;
    height: 92px;
    padding: 1px 2px 0;
    border-bottom: 1px solid #a0a0a0;
}

.face.big {
    width: 77px;
    height: 87px;
    padding: 4px 0 5px;
    flex: none;
}

.current input[type="text"] {
    width: 161px;
    margin-left: 3px;
    padding-bottom: 4px;
}

.side {
    display: flex;
    flex-direction: column;
    align-items: center;
    gap: 8px;
    margin-left: auto;
    padding-top: 3px;
}

.newmat {
    width: 22px;
    height: 22px;
}

.mini {
    width: 26px;
    height: 26px;
}

.tabs {
    display: flex;
    align-items: flex-end;
    height: 30px;
}

.tabs button {
    width: 46px;
    height: 20px;
    padding-left: 5px;
    border-top: 1px solid #fff;
    border-right: 2px solid #808080;
    text-align: left;
    line-height: 18px;
}

.tabs .on {
    width: 51px;
    height: 22px;
    padding-left: 8px;
}

.dropper {
    width: 22px;
    height: 22px;
    margin: 0 4px 4px auto;
}

.navrow {
    display: flex;
    align-items: center;
    height: 36px;
    padding: 0 5px 0 9px;
    border-bottom: 1px solid #a0a0a0;
}

.navrow button svg {
    width: 16px;
    height: 16px;
    margin-right: 12px;
}

.navrow .fwd svg {
    transform: scaleX(-1);
}

.navrow .fwd {
    margin-right: -3px;
}

.navrow .home svg {
    width: 20px;
    height: 20px;
    margin-right: 6px;
}

.navrow .home:last-child svg {
    width: 18px;
    height: 18px;
    margin: 0;
}

.navrow .select {
    flex: 1;
    margin-right: 6px;
}

.navrow select {
    height: 26px;
}

.underlined {
    background: linear-gradient(#000, #000) 3px 100% / 126px 1px no-repeat #fff;
}

.list {
    display: flex;
    justify-content: space-between;
    background: #fff;
    overflow: hidden;
}

.colors {
    height: 334px;
    margin-bottom: 4px;
}

.swatches {
    display: grid;
    grid-template-columns: repeat(3, 62px);
    grid-auto-rows: 62px;
    gap: 2px;
    padding: 2px 3px;
}

.swatches i {
    border: 1px solid #a0a0a0;
    box-shadow: inset 0 0 0 1px #fff;
}

.c1 { background: #ffcccc; }
.c2 { background: #ff9999; }
.c3 { background: #ff6666; }
.c4 { background: #ff3333; }
.c5 { background: #ff0000; }
.c6 { background: #cc0000; }
.c7 { background: #990000; }
.c8 { background: #660000; }
.c9 { background: #ffd9cc; }
.c10 { background: #ffb399; }
.c11 { background: #ff8c66; }
.c12 { background: #ff6633; }
.c13 { background: #ff4000; }
.c14 { background: #cc3300; }
.c15 { background: #992600; }
.c16 { background: #661a00; }
.c17 { background: #ffe6cc; }
.c18 { background: #ffcc99; }

.scroll {
    display: flex;
    flex-direction: column;
    align-items: center;
    width: 20px;
    background: #f0f0f0;
}

.scroll svg {
    width: 10px;
    height: 8px;
    margin: 7px 0;
}

.scroll i {
    width: 19px;
    height: 21px;
    background: #cdcdcd;
}

.scroll .down {
    margin-top: auto;
    transform: rotate(180deg);
}

.panel h3 {
    height: 28px;
    margin: 0;
    padding-left: 5px;
    border-top: 2px solid #777;
    border-bottom: 1px solid #a0a0a0;
    background: linear-gradient(#f0f0f0 3px, #a0a0a0 3px, #a0a0a0 4px, #e4e4e4 4px);
    font-size: 12px;
    font-weight: normal;
    line-height: 28px;
}

.materials > .folders {
    flex: 1;
}

.folders a {
    position: relative;
    padding: 11px;
    border: 1px solid #a0a0a0;
    color: #000;
    text-decoration: none;
}

.folders a svg {
    width: 40px;
    height: 36px;
}

.folders a span {
    position: absolute;
    left: 1px;
    bottom: 4px;
    padding: 0 2px;
    background: #fff;
    line-height: 15px;
}

/* status bar */
.status {
    display: flex;
    flex: none;
    align-items: center;
    gap: 15px;
    height: 27px;
    padding: 5px 5px 0 6px;
    background: #f0f0f0;
    overflow: hidden;
}

.status svg {
    width: 20px;
    height: 20px;
    flex: none;
}

.status p {
    flex: 1;
    margin: 0 0 0 -2px;
    padding-left: 8px;
    border-left: 1px solid #999;
    font-size: 17px;
    line-height: 20px;
    white-space: nowrap;
}

.measure {
    display: flex;
    align-items: center;
    gap: 8px;
    width: 302px;
    padding-left: 10px;
    border-left: 1px solid #999;
    font-size: 17px;
    line-height: 20px;
    white-space: nowrap;
}

.measure input[type="text"] {
    height: 22px;
    border: 1px solid #a9b5c2;
    background: #fff;
    font-family: "Noto Sans", sans-serif;
    font-size: 16px;
}
```
